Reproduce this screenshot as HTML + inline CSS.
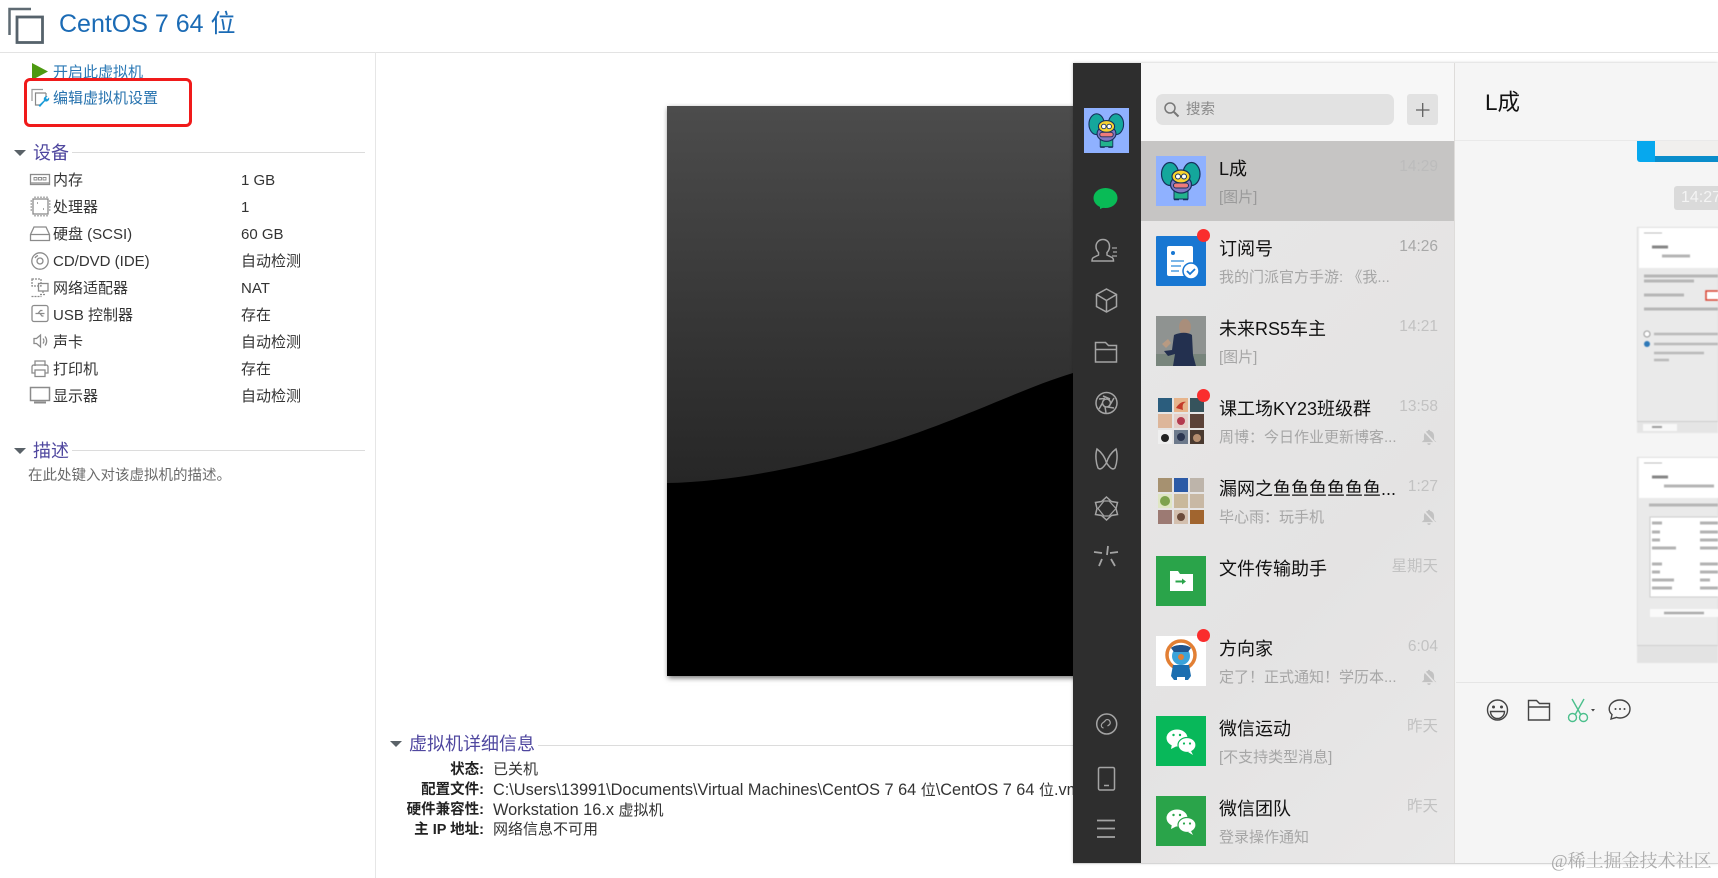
<!DOCTYPE html>
<html lang="zh-CN"><head><meta charset="utf-8"><title>CentOS 7 64 位</title>
<style>
html,body{margin:0;padding:0;background:#fff}
body{width:1718px;height:878px;position:relative;overflow:hidden;font-family:"Liberation Sans","Noto Sans CJK SC",sans-serif;color:#222;filter:blur(.3px)}
.a{position:absolute}
.t{position:absolute;white-space:nowrap;line-height:20px;height:20px}
.l{font-size:15px;color:#333;left:53px}
.v{font-size:15px;color:#333;left:241px}
.h{font-size:18px;color:#4f479f}
.r{font-weight:bold;font-size:14.5px;color:#222;right:1234px}
.d{font-size:15px;color:#333;left:493px}
.d b{font-weight:normal;font-size:16.3px}
.row{position:absolute;left:1141px;width:313px;height:80px}
.n{position:absolute;left:78px;top:17px;font-size:18px;line-height:22px;color:#111;white-space:nowrap}
.p{position:absolute;left:78px;top:47px;font-size:15px;line-height:20px;color:#a6a6a6;white-space:nowrap}
.m{position:absolute;right:16px;top:16px;font-size:15.5px;line-height:20px;color:#c2c2c2;white-space:nowrap}
svg{position:absolute;overflow:visible}
.dot{position:absolute;left:56px;top:8px;width:13px;height:13px;border-radius:50%;background:#fa2d2d}
.av{position:absolute;left:15px;top:15px;width:50px;height:50px}
.shot{filter:blur(.6px)}
</style></head><body>

<!-- VMware side -->
<div class="a" style="left:0;top:52px;width:1718px;height:1px;background:#e3e3e3"></div>
<div class="a" style="left:375px;top:52px;width:1px;height:826px;background:#e6e6e6"></div>
<svg style="left:0;top:0" width="60" height="50" fill="none">
<path d="M31 9H9.500V35" stroke="#5f6b73" stroke-width="2.500"/>
<rect x="17" y="17" width="25.500" height="25.500" stroke="#56626b" stroke-width="2.800"/>
</svg>
<div class="t" style="left:59px;top:9px;height:30px;line-height:30px;font-size:25px;color:#1b6bb5">CentOS 7 64 位</div>

<svg style="left:0;top:0" width="60" height="90"><path d="M32 63L48 71.500 32 80Z" fill="#4d9a10"/></svg>
<div class="t" style="left:53px;top:63px;font-size:15px;color:#2a78b5">开启此虚拟机</div>
<div class="a" style="left:24px;top:78px;width:162px;height:43px;border:3px solid #f01a1a;border-radius:6px;background:#fff"></div>
<svg style="left:30px;top:88px" width="22" height="22" fill="none">
<path d="M13 1.500H2V13" stroke="#999" stroke-width="1.200"/><path d="M16 5H5.500V17H11M16 5V9" stroke="#888" stroke-width="1.200"/>
<path d="M19 9.500a3 3 0 0 1-4 3.800L10 19l-1.500-1.500 5.500-5.200a3 3 0 0 1 3.600-4l-1.700 1.700 1.300 1.200Z" fill="#1b9bd8"/>
</svg>
<div class="t" style="left:53px;top:89px;font-size:15px;color:#2672ae">编辑虚拟机设置</div>

<svg style="left:0;top:0" width="40" height="470"><path d="M14 150H26L20 156Z M14 448H26L20 454Z" fill="#5a6268"/></svg>
<div class="t h" style="left:33px;top:143px">设备</div>
<div class="a" style="left:72px;top:152px;width:293px;height:1px;background:#dcdcdc"></div>
<div class="t l" style="top:171px">内存</div><div class="t v" style="top:171px">1 GB</div>
<div class="t l" style="top:198px">处理器</div><div class="t v" style="top:198px">1</div>
<div class="t l" style="top:225px">硬盘 (SCSI)</div><div class="t v" style="top:225px">60 GB</div>
<div class="t l" style="top:252px">CD/DVD (IDE)</div><div class="t v" style="top:252px">自动检测</div>
<div class="t l" style="top:279px">网络适配器</div><div class="t v" style="top:279px">NAT</div>
<div class="t l" style="top:306px">USB 控制器</div><div class="t v" style="top:306px">存在</div>
<div class="t l" style="top:333px">声卡</div><div class="t v" style="top:333px">自动检测</div>
<div class="t l" style="top:360px">打印机</div><div class="t v" style="top:360px">存在</div>
<div class="t l" style="top:387px">显示器</div><div class="t v" style="top:387px">自动检测</div>

<svg style="left:0;top:-1px" width="60" height="420" fill="none" stroke="#8b8b8b" stroke-width="1.300">
<rect x="30.500" y="175.500" width="19" height="10"/><path d="M34 178.500h3v2.500h-3zM38.500 178.500h3v2.500h-3zM43 178.500h3v2.500h-3z" stroke-width=".9"/><path d="M31 184h18" />
<rect x="33" y="200" width="15" height="15"/><path d="M35 197.500v1.500M38 197.500v1.500M41 197.500v1.500M44 197.500v1.500M47 197.500v1.500M35 216v1.500M38 216v1.500M41 216v1.500M44 216v1.500M47 216v1.500M30.500 202h1.500M30.500 205h1.500M30.500 208h1.500M30.500 211h1.500M49 202h1.500M49 205h1.500M49 208h1.500M49 211h1.500"/><path d="M37 204h1M43 210h1" stroke-width="1.500"/>
<path d="M34 228h12l3.500 7.500v6h-19v-6Z"/><path d="M30.500 235.500h19"/>
<circle cx="40" cy="262" r="8.200"/><circle cx="40" cy="262" r="3"/><path d="M35 259a5.500 5.500 0 0 1 3-2.500" />
<rect x="32" y="280" width="9" height="7" stroke-dasharray="2 1"/><rect x="38.500" y="284.500" width="9.500" height="7.500"/><path d="M43 292v3M40 295.500h6M31.500 297.500h10" stroke-dasharray="2 1"/>
<rect x="32" y="306.500" width="16" height="16" rx="2"/><path d="M35.500 314.500h9M38 314.500l2.500-3h2M40 314.500l2 2.500h1.500"/>
<path d="M34 339.500h2.500l4-3.500v12l-4-3.500H34Z"/><path d="M43 339.500a4 4 0 0 1 0 5M45 337.500a7 7 0 0 1 0 9"/>
<path d="M35 367v-5h10v5M35 374h-3v-6.500a2 2 0 0 1 2-1.500h12a2 2 0 0 1 2 1.500V374h-3"/><rect x="35" y="371" width="10" height="6.500"/>
<rect x="30.500" y="388.500" width="19" height="13" stroke-width="1.500"/><path d="M34 403.500h12" stroke-width="2"/>
</svg>

<div class="t h" style="left:33px;top:441px">描述</div>
<div class="a" style="left:72px;top:450px;width:293px;height:1px;background:#dcdcdc"></div>
<div class="t" style="left:28px;top:466px;font-size:14.500px;color:#6b6b6b">在此处键入对该虚拟机的描述。</div>

<!-- VM preview -->
<div class="a" style="left:667px;top:106px;width:420px;height:570px;background:#000;box-shadow:1px 2px 5px rgba(0,0,0,.55)"></div>
<svg style="left:667px;top:106px" width="406" height="570"><defs><linearGradient id="g1" x1="0" y1="0" x2="0" y2="1"><stop offset="0" stop-color="#4c4c4c"/><stop offset="1" stop-color="#262626"/></linearGradient></defs>
<path d="M0 0H406V267C370 278 340 292 306 305.500S240 332 186 347C130 362 60 376 0 377Z" fill="url(#g1)"/></svg>

<svg style="left:385px;top:736px" width="20" height="16"><path d="M5 5H17L11 11Z" fill="#5a6268"/></svg>
<div class="t h" style="left:409px;top:734px">虚拟机详细信息</div>
<div class="a" style="left:538px;top:745px;width:540px;height:1px;background:#dcdcdc"></div>
<div class="t r" style="top:760px">状态:</div><div class="t d" style="top:760px">已关机</div>
<div class="t r" style="top:780px">配置文件:</div><div class="t d" style="top:780px"><b>C:\Users\13991\Documents\Virtual Machines\CentOS 7 64 </b>位<b>\CentOS 7 64 </b>位<b>.vmx</b></div>
<div class="t r" style="top:800px">硬件兼容性:</div><div class="t d" style="top:800px"><b>Workstation 16.x </b>虚拟机</div>
<div class="t r" style="top:820px">主 IP 地址:</div><div class="t d" style="top:820px">网络信息不可用</div>

<!-- WeChat window -->
<div class="a" style="left:1073px;top:63px;width:645px;height:800px;background:#f5f5f5;box-shadow:0 0 3px rgba(0,0,0,.25)"></div>
<div class="a" style="left:1073px;top:63px;width:68px;height:800px;background:#2e2e2e"></div>
<div class="a" style="left:1141px;top:63px;width:313px;height:78px;background:#f7f7f7"></div>
<div class="a" style="left:1141px;top:141px;width:313px;height:722px;background:linear-gradient(135deg,#e8e7e7,#e4e3e3 60%,#e9e8e8)"></div>
<div class="a" style="left:1454px;top:63px;width:1px;height:800px;background:#dedcda"></div>

<!-- shared symbols -->
<svg width="0" height="0" style="left:0;top:0"><defs>
<symbol id="mon" viewBox="0 0 50 50">
<rect width="50" height="50" fill="#8fb1ff"/>
<ellipse cx="14" cy="18" rx="8.500" ry="11.500" fill="#14a79c" stroke="#16315c" stroke-width="1.200"/>
<ellipse cx="35.500" cy="18" rx="8.500" ry="11.500" fill="#14a79c" stroke="#16315c" stroke-width="1.200"/>
<rect x="18" y="34" width="14" height="9" fill="#22b38c" stroke="#16315c"/><path d="M18 43.500h5M27 43.500h5" stroke="#16315c" stroke-width="1.500"/>
<ellipse cx="25" cy="28.500" rx="10.500" ry="8.500" fill="#8277c2" stroke="#16315c" stroke-width="1.200"/>
<ellipse cx="25" cy="20.500" rx="9" ry="6.500" fill="#f8d32e" stroke="#16315c" stroke-width="1.200"/>
<circle cx="22" cy="20.500" r="2.500" fill="#fff" stroke="#16315c"/><circle cx="28" cy="20.500" r="2.500" fill="#fff" stroke="#16315c"/>
<rect x="17.500" y="27" width="15" height="5" rx="2.500" fill="#ee7b7b" stroke="#16315c"/>
</symbol>
<symbol id="wx" viewBox="0 0 50 50">
<ellipse cx="21" cy="22" rx="10.500" ry="8.500" fill="#fff"/><path d="M16 28l-1 5 6-3Z" fill="#fff"/>
<ellipse cx="31" cy="29" rx="9" ry="7.500" fill="#fff" stroke="currentColor" stroke-width="1.200"/><path d="M35 35l2 4-5-3Z" fill="#fff"/>
<circle cx="17.500" cy="19" r="1.200" fill="currentColor"/><circle cx="24" cy="19" r="1.200" fill="currentColor"/>
<circle cx="28" cy="27.500" r="1.100" fill="currentColor"/><circle cx="34" cy="27.500" r="1.100" fill="currentColor"/>
</symbol>
<symbol id="mute" viewBox="0 0 16 16"><path d="M8 1.500a1 1 0 0 1 1 1A4.500 4.500 0 0 1 12.500 7v3.500l2 2h-13l2-2V7A4.500 4.500 0 0 1 7 2.500a1 1 0 0 1 1-1ZM6.500 13.500h3a1.500 1.500 0 0 1-3 0Z" fill="#c2c2c2"/><path d="M2.500 1.500l12 13" stroke="#e6e5e5" stroke-width="1.500"/></symbol>
</defs></svg>

<!-- sidebar icons -->
<svg style="left:1084px;top:108px" width="45" height="45"><use href="#mon" width="45" height="45"/></svg>
<svg style="left:1073px;top:63px" width="68" height="800" fill="none" stroke="#a4a4a4" stroke-width="1.500">
<ellipse cx="32.500" cy="135" rx="12" ry="10" fill="#09bb56" stroke="none"/><path d="M27 143l0 3 5-2Z" fill="#09bb56" stroke="none"/>
<path d="M30 176.500c-4 0-7 3-7 7 0 2.500 1 4.500 2.500 6v2.500l-5 2.500c-1 .5-1.500 1.500-1.500 3.500h21.500c0-2-.5-3-1.500-3.500l-5-2.500v-2.500c1.500-1.500 2.500-3.500 2.500-6 0-4-2.500-7-6.500-7Z"/><path d="M39 185h5M40 189h4M39 193h5" stroke-width="1.200"/>
<path d="M33.500 226l10 5.500v12L33.500 249l-10-5.500v-12ZM23.500 231.500l10 6 10-6M33.500 237.500V249"/>
<path d="M22.500 299V279.500h10l3 3h8V299ZM22.500 286.500h21"/>
<circle cx="33.500" cy="340" r="10.500"/><circle cx="33.500" cy="340" r="4"/><path d="M30 333l7 3M41 335l-3.500 6M41 345l-6.500-1M33 350l-1-6.500M26 346l3.500-6M26 336l6-.5"/>
<path d="M24 386c4 3 8 8 9.500 14 1.500-6 5.500-11 9.500-14 2 6 1 14-1 19-3 3-6-2-8.500-5-2.500 3-5.500 8-8.500 5-2-5-3-13-1-19Z"/>
<path d="M33.500 434l5 4.500 6 1-1.500 6 1.500 6-6 1-5 4.500-5-4.500-6-1 1.500-6-1.500-6 6-1Z"/><path d="M25 445.500l6-7.500h5l7 7.500-7 7.500h-5Z" stroke-width="1.200"/>
<path d="M35 483l-1 9M21 489l8 1M45 489l-8 1M26 503l3-7M42 503l-4-7" stroke-width="1.800"/>
<circle cx="33.700" cy="661" r="10"/><path d="M30.500 665a2.500 2.500 0 0 1-2-3.500c.5-2 2.500-2 3.500-3.500 1-2 4-2 5 .5s-1 3.500-2.500 4.500" stroke-width="1.200"/>
<rect x="25.500" y="704.500" width="16" height="22.500" rx="1.500"/><path d="M31 722.500h5"/>
<path d="M24 757.500h18M24 765.500h18M24 774h18" stroke-width="1.800"/>
</svg>

<!-- search -->
<div class="a" style="left:1156px;top:94px;width:238px;height:31px;border-radius:7px;background:#e2e2e2"></div>
<svg style="left:1162px;top:100px" width="20" height="20" fill="none" stroke="#777" stroke-width="1.500"><circle cx="8" cy="8" r="5"/><path d="M12 12l4.500 4.500" stroke-width="2"/></svg>
<div class="t" style="left:1186px;top:100px;font-size:14.500px;color:#8a8a8a">搜索</div>
<div class="a" style="left:1407px;top:94px;width:31px;height:31px;border-radius:3px;background:#e2e2e2"></div>
<svg style="left:1407px;top:94px" width="31" height="31"><path d="M9 16h13.500M15.700 9v14" stroke="#5f5f5f" stroke-width="1.300"/></svg>

<!-- rows -->
<div class="row" style="top:141px;background:#c6c5c4">
<svg class="av" viewBox="0 0 50 50"><use href="#mon" width="50" height="50"/></svg>
<div class="n">L成</div><div class="p" style="color:#9a9a9a">[图片]</div><div class="m" style="color:#bcbcbc">14:29</div></div>

<div class="row" style="top:221px">
<svg class="av" viewBox="0 0 50 50"><rect width="50" height="50" rx="1" fill="#1877d2"/><rect x="11" y="10" width="26" height="30" rx="2" fill="#fff"/><circle cx="17" cy="17" r="2" fill="#1877d2"/><path d="M15 25h13M15 30h10M15 35h8" stroke="#4f9ee0" stroke-width="1.500"/><circle cx="35" cy="35" r="8" fill="#fff" stroke="#1877d2" stroke-width="1.500"/><path d="M31 35l3 3 5-5" fill="none" stroke="#1877d2" stroke-width="1.800"/></svg>
<div class="dot"></div><div class="n">订阅号</div><div class="p">我的门派官方手游: 《我...</div><div class="m" style="color:#a8a8a8">14:26</div></div>

<div class="row" style="top:301px">
<svg class="av" viewBox="0 0 50 50"><rect width="50" height="50" fill="#8f9391"/><rect y="38" width="50" height="12" fill="#78857c"/><ellipse cx="29" cy="11" rx="6" ry="8" fill="#a98e7b"/><path d="M18 19c6-3 14-3 18 0l1 20 3 11H17l2-12-7 2-4-5 8-1Z" fill="#23304f"/><path d="M6 28l6-5 3 4-5 5Z" fill="#b89a82"/></svg>
<div class="n">未来RS5车主</div><div class="p">[图片]</div><div class="m">14:21</div></div>

<div class="row" style="top:381px">
<svg class="av" viewBox="0 0 50 50">
<rect x="2" y="2" width="14" height="14" fill="#2b5d7d"/><rect x="18" y="2" width="14" height="14" fill="#e7b48b"/><path d="M20 12c3-5 7-7 10-6-3 1-4 3-3 8Z" fill="#c43a2a"/><rect x="34" y="2" width="14" height="14" fill="#36535c"/>
<rect x="2" y="18" width="14" height="14" fill="#ddb69a"/><rect x="18" y="18" width="14" height="14" fill="#e5cfc9"/><circle cx="25" cy="25" r="4" fill="#b33a4f"/><rect x="34" y="18" width="14" height="14" fill="#5b4238"/>
<rect x="2" y="34" width="14" height="14" fill="#efefef"/><circle cx="9" cy="42" r="4" fill="#222"/><rect x="18" y="34" width="14" height="14" fill="#6d7a8c"/><circle cx="25" cy="41" r="4" fill="#2b3550"/><rect x="34" y="34" width="14" height="14" fill="#4a3a30"/><circle cx="41" cy="42" r="4" fill="#b58e6f"/></svg>
<div class="dot"></div><div class="n">课工场KY23班级群</div><div class="p">周博&#xFF1A;今日作业更新博客...</div><div class="m">13:58</div>
<svg style="left:279px;top:47px" width="18" height="18"><use href="#mute" width="18" height="18"/></svg></div>

<div class="row" style="top:461px">
<svg class="av" viewBox="0 0 50 50">
<rect x="2" y="2" width="14" height="14" fill="#a69170"/><rect x="18" y="2" width="14" height="14" fill="#2c5aa6"/><rect x="34" y="2" width="14" height="14" fill="#bdb4aa"/>
<rect x="2" y="18" width="14" height="14" fill="#dfe6c3"/><circle cx="9" cy="25" r="5" fill="#7ea24e"/><rect x="18" y="18" width="14" height="14" fill="#c9b89b"/><rect x="34" y="18" width="14" height="14" fill="#c8b8a4"/>
<rect x="2" y="34" width="14" height="14" fill="#9c7a73"/><rect x="18" y="34" width="14" height="14" fill="#d3bfae"/><circle cx="25" cy="41" r="4" fill="#6b4b3a"/><rect x="34" y="34" width="14" height="14" fill="#a1652f"/></svg>
<div class="n">漏网之鱼鱼鱼鱼鱼鱼...</div><div class="p">毕心雨&#xFF1A;玩手机</div><div class="m">1:27</div>
<svg style="left:279px;top:47px" width="18" height="18"><use href="#mute" width="18" height="18"/></svg></div>

<div class="row" style="top:541px">
<svg class="av" viewBox="0 0 50 50"><rect width="50" height="50" fill="#2aa44a"/><path d="M14 15h8l2 3h13v17H14Z" fill="#fff"/><path d="M19.500 25.500h7" stroke="#2aa44a" stroke-width="2"/><path d="M26 22.500l4 3-4 3Z" fill="#2aa44a"/></svg>
<div class="n">文件传输助手</div><div class="m">星期天</div></div>

<div class="row" style="top:621px">
<svg class="av" viewBox="0 0 50 50"><rect width="50" height="50" fill="#fff"/><circle cx="25" cy="19" r="14" fill="none" stroke="#e27f34" stroke-width="3.500"/><circle cx="25" cy="20" r="9" fill="#3ba3da"/><path d="M15 12c4-4 16-4 20 0l-3 4H18Z" fill="#20548e"/><circle cx="25" cy="21" r="3" fill="#e27f34"/><path d="M17 29h16l2 11-3 4h-3v-3h-8v3h-3l-3-4Z" fill="#1b6eb0"/></svg>
<div class="dot"></div><div class="n">方向家</div><div class="p">定了&#xFF01;正式通知&#xFF01;学历本...</div><div class="m">6:04</div>
<svg style="left:279px;top:47px" width="18" height="18"><use href="#mute" width="18" height="18"/></svg></div>

<div class="row" style="top:701px">
<svg class="av" viewBox="0 0 50 50" style="color:#08b85a"><rect width="50" height="50" fill="#08b85a"/><use href="#wx" width="50" height="50"/></svg>
<div class="n">微信运动</div><div class="p">[不支持类型消息]</div><div class="m">昨天</div></div>

<div class="row" style="top:781px">
<svg class="av" viewBox="0 0 50 50" style="color:#2aa44a"><rect width="50" height="50" fill="#2aa44a"/><use href="#wx" width="50" height="50"/></svg>
<div class="n">微信团队</div><div class="p">登录操作通知</div><div class="m">昨天</div></div>

<!-- chat -->
<div class="t" style="left:1485px;top:89px;height:28px;line-height:28px;font-size:22.500px;color:#111">L成</div>
<div class="a" style="left:1455px;top:140px;width:263px;height:1px;background:#e9e9e9"></div>
<div class="a" style="left:1637px;top:141px;width:81px;height:21px;background:#06a8ee;border-radius:0 0 0 3px"></div>
<div class="a" style="left:1655px;top:141px;width:63px;height:15px;background:#f0efed"></div>
<div class="a" style="left:1655px;top:156px;width:63px;height:6px;background:#0a8dcb"></div>
<div class="a" style="left:1674px;top:186px;width:44px;height:24px;border-radius:3px 0 0 3px;background:#dadada"></div>
<div class="t" style="left:1681px;top:188px;font-size:16px;color:#f4f4f4">14:27</div>

<!-- screenshot 1 -->
<svg class="shot" style="left:1637px;top:227px;overflow:hidden" width="81" height="206">
<rect width="81" height="206" fill="#eaeaea" stroke="#d5d5d5"/><rect x="2" y="1" width="79" height="40" fill="#fff"/>
<path d="M7 6h18" stroke="#bbb"/><path d="M15 20h16" stroke="#444" stroke-width="3" stroke-opacity=".65"/><path d="M25 29h28" stroke="#777" stroke-width="3" stroke-opacity=".55"/>
<path d="M7 49h75M7 54h50M7 68h40M7 82h80" stroke="#777" stroke-width="3" stroke-opacity=".45"/><rect x="69" y="64" width="14" height="9" fill="#fff" stroke="#d8402f" stroke-width="1.500"/>
<circle cx="10" cy="107" r="3" fill="#fff" stroke="#999"/><circle cx="10" cy="117" r="3" fill="#2e79b8"/>
<path d="M17 107h65M17 117h65M17 126h50M17 133h15" stroke="#888" stroke-width="2.500" stroke-opacity=".5"/>
<rect y="195" width="81" height="11" fill="#e5e5e5"/><rect y="194" width="81" height="1" fill="#ccc"/><rect x="6" y="197" width="34" height="7" fill="#f8f8f8"/><path d="M15 200h10" stroke="#777" stroke-width="2" stroke-opacity=".7"/>
</svg>
<!-- screenshot 2 -->
<svg class="shot" style="left:1637px;top:457px;overflow:hidden" width="81" height="206">
<rect width="81" height="206" fill="#eaeaea" stroke="#d5d5d5"/><rect x="2" y="1" width="79" height="40" fill="#fff"/>
<path d="M7 6h18" stroke="#bbb"/><path d="M15 20h16" stroke="#444" stroke-width="3" stroke-opacity=".65"/><path d="M27 29h50" stroke="#777" stroke-width="3" stroke-opacity=".55"/>
<path d="M12 48h70" stroke="#777" stroke-width="3" stroke-opacity=".45"/>
<rect x="13" y="60" width="70" height="80" fill="#fff" stroke="#ccc"/>
<path d="M15 66h10M15 75h8M15 83h8M15 91h24M15 107h10M15 115h8M15 123h22M15 131h20M63 66h20M63 75h20M63 83h20M63 91h20M63 107h20M63 115h20M63 123h10M63 131h20" stroke="#666" stroke-width="3" stroke-opacity=".5"/>
<rect x="13" y="152" width="70" height="8" fill="#fafafa"/><path d="M27 156h40" stroke="#777" stroke-width="2.500" stroke-opacity=".6"/>
<rect y="188" width="81" height="18" fill="#e3e3e3"/><rect y="188" width="81" height="1" fill="#d0d0d0"/>
</svg>

<div class="a" style="left:1456px;top:682px;width:262px;height:1px;background:#e5e5e5"></div>
<svg style="left:1480px;top:695px" width="160" height="30" fill="none" stroke="#444" stroke-width="1.400">
<circle cx="17.500" cy="15" r="10"/><circle cx="13.500" cy="12" r="1.500" fill="#444" stroke="none"/><circle cx="21.500" cy="12" r="1.500" fill="#444" stroke="none"/><path d="M10.500 16.500h14a7 7 0 0 1-14 0Z"/>
<path d="M48.500 25V5.500h8l3 3h10V25ZM48.500 12h21"/>
<path d="M92 4l9 16M104 4l-9 16" stroke="#4bbf8c"/><circle cx="92.500" cy="22.500" r="4" stroke="#4bbf8c"/><circle cx="103.500" cy="22.500" r="4" stroke="#4bbf8c"/><path d="M111 14h4l-2 2.500Z" fill="#444" stroke="none"/>
<path d="M140 5c5.500 0 10 3.800 10 9s-4.500 9-10 9c-1.200 0-2.500-.2-3.600-.6L131 24l1-4.500c-1.800-1.500-2.800-3.500-2.800-5.500 0-5.200 5-9 10.800-9Z"/><circle cx="135.500" cy="14" r="1" fill="#444" stroke="none"/><circle cx="140" cy="14" r="1" fill="#444" stroke="none"/><circle cx="144.500" cy="14" r="1" fill="#444" stroke="none"/>
</svg>

<div class="a" style="left:1073px;top:863px;width:645px;height:1px;background:#d6d6d6"></div>
<div class="t" style="left:1551px;top:849px;height:24px;line-height:24px;font-size:18px;color:#ababab;font-family:'Liberation Serif','Noto Serif CJK SC',serif">@稀土掘金技术社区</div>
</body></html>
